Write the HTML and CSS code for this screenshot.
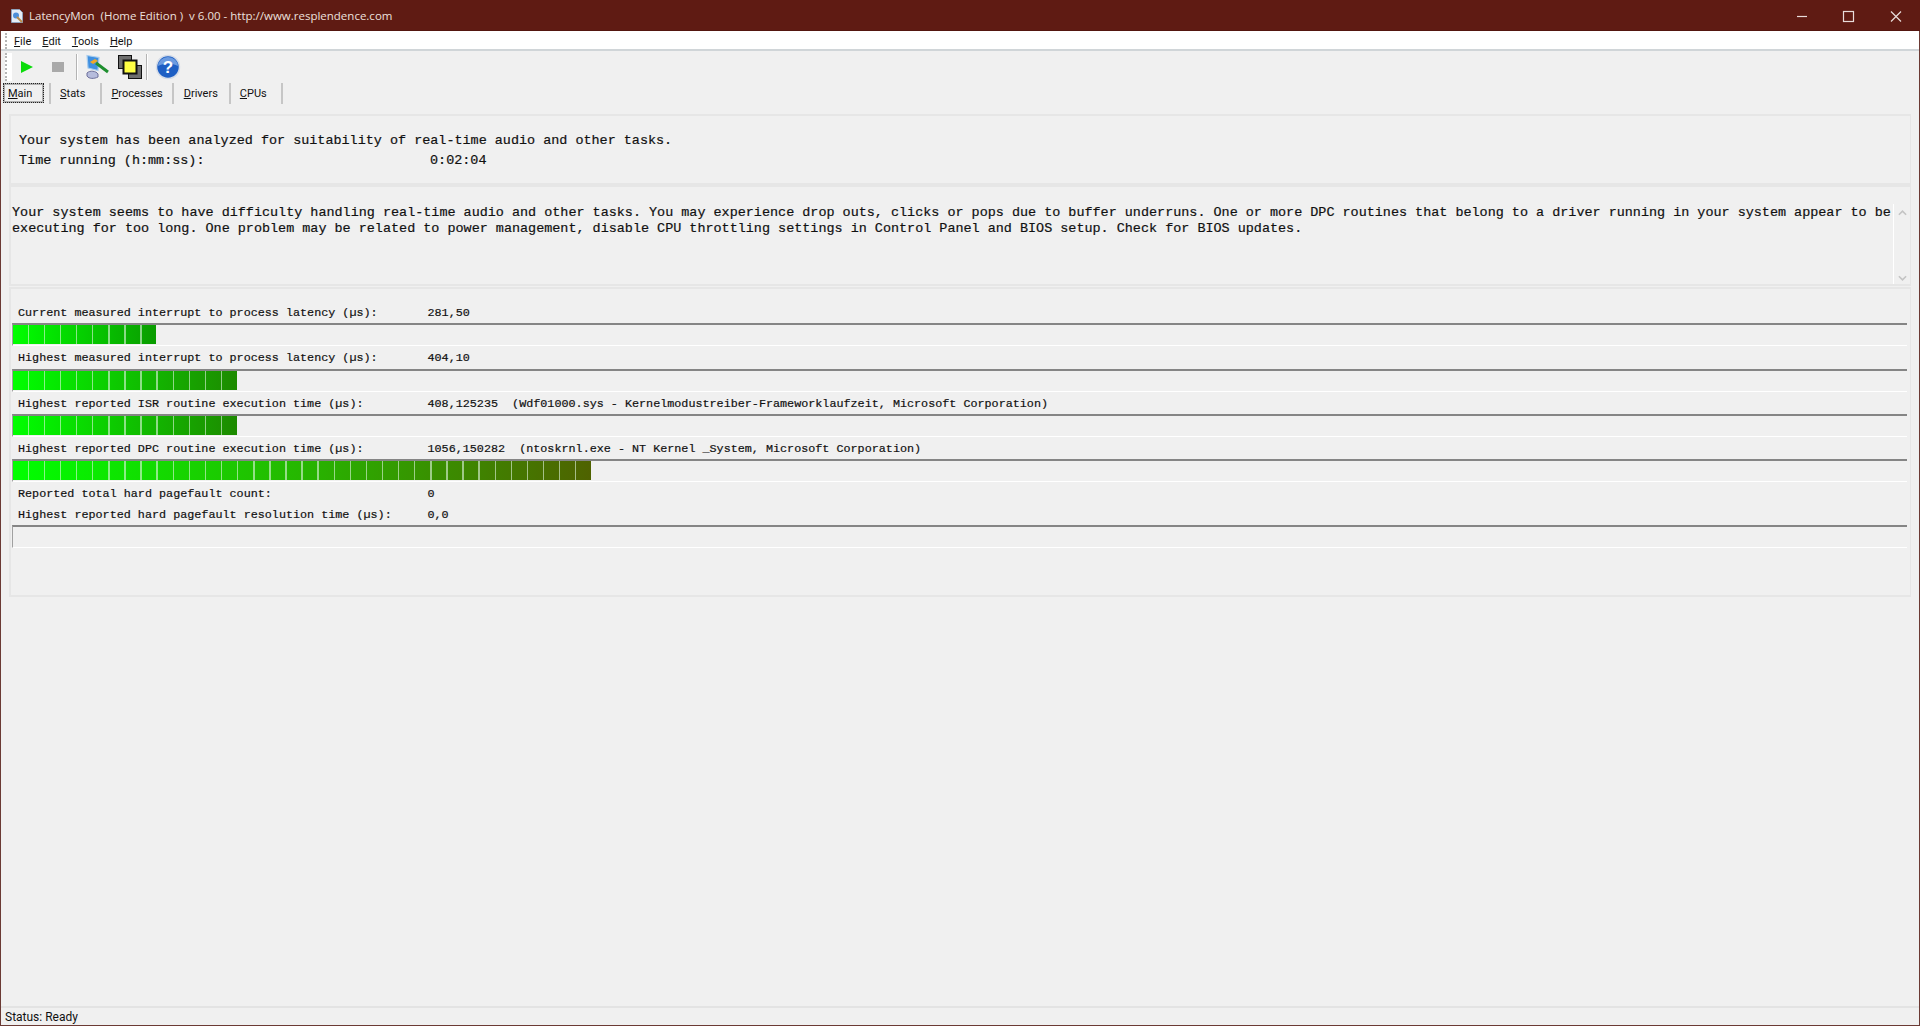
FILE: index.html
```html
<!DOCTYPE html>
<html lang="en">
<head>
<meta charset="utf-8">
<title>LatencyMon</title>
<link rel="stylesheet" href="styles.css">
</head>
<body>
<div class="window">
  <header class="titlebar">
    <svg class="appicon" viewBox="0 0 16 16" width="16" height="16">
      <path d="M2.500 1.500h8l3 3v10h-11z" fill="#e6edf6" stroke="#8fa3bd"/>
      <circle cx="7" cy="7.500" r="3" fill="#4f8fd8"/>
      <path d="M8 9l5 5" stroke="#b98b4a" stroke-width="2"/>
    </svg>
    <span class="title-text">LatencyMon&nbsp; (Home Edition )&nbsp; v 6.00 - http://www.resplendence.com</span>
    <div class="winctrls">
      <svg viewBox="0 0 46 30" width="46" height="30"><path d="M18 15.500h10" stroke="#e9dcda" stroke-width="1.200"/></svg>
      <svg class="ctrl-max" viewBox="0 0 46 30" width="46" height="30"><rect x="18.500" y="10.500" width="10" height="10" fill="none" stroke="#e9dcda" stroke-width="1.200"/></svg>
      <svg viewBox="0 0 46 30" width="46" height="30"><path d="M18 10.500l10 10M28 10.500l-10 10" stroke="#e9dcda" stroke-width="1.200"/></svg>
    </div>
  </header>
  <nav class="menubar">
    <span class="grip"></span>
    <span class="menu"><u>F</u>ile</span><span class="menu"><u>E</u>dit</span><span class="menu"><u>T</u>ools</span><span class="menu"><u>H</u>elp</span>
  </nav>
  <div class="toolbar">
    <span class="grip grip-tool"></span>
    <svg class="tool tool-play" viewBox="0 0 24 24" width="24" height="24"><path d="M6 6l12 6-12 6z" fill="#0bdc0b"/></svg>
    <svg class="tool tool-stop" viewBox="0 0 24 24" width="24" height="24"><rect x="6" y="7" width="12" height="10" fill="#a9a9a9"/></svg>
    <span class="sep"></span>
    <svg class="tool tool-mon" viewBox="0 0 26 26" width="26" height="26">
      <path d="M3 1.500l12 2-1 13-10-2.500z" fill="#3f8fe0" stroke="#a8cdee" stroke-width="1.200"/>
      <path d="M3 19c3-3 9-2 11 1v3c-4 2-9 2-11-1z" fill="#b6bcdc" stroke="#6c6f9a"/>
      <path d="M6 8l5-3 3 2-5 3z" fill="#f0a828"/>
      <path d="M12 9l12 9" stroke="#1f8f2f" stroke-width="3"/>
    </svg>
    <svg class="tool tool-win" viewBox="0 0 26 26" width="26" height="26">
      <rect x="1.500" y="1.500" width="13" height="13" fill="#6e6e6e" stroke="#111"/>
      <rect x="11.500" y="11.500" width="13" height="13" fill="#6e6e6e" stroke="#111"/>
      <rect x="6.500" y="6.500" width="13" height="13" fill="#ffff44" stroke="#111" stroke-width="2"/>
    </svg>
    <span class="sep sep-help"></span>
    <svg class="tool tool-help" viewBox="0 0 26 26" width="26" height="26">
      <circle cx="13" cy="13" r="11.500" fill="#1e5fc4" stroke="#d5dce8" stroke-width="1.500"/>
      <path d="M3 12a10 9 0 0 1 20 0c-6-3-14-3-20 0z" fill="#6c9be0"/>
      <text x="13" y="19" class="help-q">?</text>
    </svg>
  </div>
  <div class="tabs">
    <span class="tab tab-active"><u>M</u>ain</span>
    <span class="tab tab-stats"><u>S</u>tats</span>
    <span class="tab tab-proc"><u>P</u>rocesses</span>
    <span class="tab tab-drv"><u>D</u>rivers</span>
    <span class="tab tab-cpu"><u>C</u>PUs</span>
  </div>
  <main class="content">
    <section class="panel panel-head">
      <p class="big">Your system has been analyzed for suitability of real-time audio and other tasks.</p>
      <p class="big time-row"><span class="time-label">Time running (h:mm:ss):</span><span>0:02:04</span></p>
    </section>
    <section class="panel panel-msg">
      <p class="big msg">Your system seems to have difficulty handling real-time audio and other tasks. You may experience drop outs, clicks or pops due to buffer underruns. One or more DPC routines that belong to a driver running in your system appear to be executing for too long. One problem may be related to power management, disable CPU throttling settings in Control Panel and BIOS setup. Check for BIOS updates.</p>
      <div class="scroll">
        <svg viewBox="0 0 10 6" width="9" height="6"><path d="M1 5l4-4 4 4" fill="none" stroke="#c4c4c4" stroke-width="1.800"/></svg>
        <svg viewBox="0 0 10 6" width="9" height="6"><path d="M1 1l4 4 4-4" fill="none" stroke="#c4c4c4" stroke-width="1.800"/></svg>
      </div>
    </section>
    <section class="panel panel-meters">
      <div class="row"><span class="lbl">Current measured interrupt to process latency (µs):</span><span>281,50</span></div>
      <div class="bar"><div class="fill fill-a"></div></div>
      <div class="row"><span class="lbl">Highest measured interrupt to process latency (µs):</span><span>404,10</span></div>
      <div class="bar"><div class="fill fill-b"></div></div>
      <div class="row"><span class="lbl">Highest reported ISR routine execution time (µs):</span><span>408,125235&nbsp; (Wdf01000.sys - Kernelmodustreiber-Frameworklaufzeit, Microsoft Corporation)</span></div>
      <div class="bar"><div class="fill fill-b"></div></div>
      <div class="row"><span class="lbl">Highest reported DPC routine execution time (µs):</span><span>1056,150282&nbsp; (ntoskrnl.exe - NT Kernel _System, Microsoft Corporation)</span></div>
      <div class="bar"><div class="fill fill-c"></div></div>
      <div class="row"><span class="lbl">Reported total hard pagefault count:</span><span>0</span></div>
      <div class="row row-tight"><span class="lbl">Highest reported hard pagefault resolution time (µs):</span><span>0,0</span></div>
      <div class="bar"></div>
    </section>
  </main>
  <footer class="status">Status: Ready</footer>
</div>
</body>
</html>
```
FILE: styles.css
```css
* { box-sizing: border-box; }
html, body { margin: 0; height: 100%; }
body { background: #f0f0f0; overflow: hidden; }
p { margin: 0; }
.window {
  height: 1026px; display: flex; flex-direction: column;
  border-left: 1px solid #6b3a34; border-right: 1px solid #6b3a34; border-bottom: 1px solid #6b3a34;
  font-family: Roboto, "Open Sans", sans-serif; color: #111;
}
.titlebar { height: 31px; background: #5f1b13; color: #ece0de; display: flex; align-items: center; padding: 1px 0 0 9px; flex: none; margin: 0 -1px; border-bottom: 1px solid #54160f; }
.appicon { margin-right: 4px; }
.title-text { font-family: "Open Sans", sans-serif; font-size: 11.5px; flex: 1; }
.winctrls { display: flex; margin-right: 1px; }
.winctrls svg { display: block; }
.ctrl-max { margin-right: 2px; }
.menubar { height: 20px; background: #fff; border-bottom: 2px solid #d0d5d8; display: flex; align-items: center; flex: none; padding: 2px 0 0 4px; font-size: 11px; }
.grip { width: 2px; height: 100%; border-left: 2px dotted #b5b5b5; margin-right: 7px; }
.menu { margin-right: 11px; }
.toolbar { height: 32px; display: flex; align-items: center; flex: none; padding-left: 4px; }
.grip-tool { width: 7px; height: 28px; margin-right: 3px; background: #fff; }
.tool { display: block; flex: none; }
.tool-stop { margin-left: 7px; }
.tool-mon { margin-left: 6px; }
.tool-win { margin-left: 7px; }
.tool-help { margin-left: 7px; }
.sep { width: 2px; height: 26px; background: #b4b4b4; border-right: 1px solid #fff; margin-left: 6px; }
.sep-help { margin-left: 3px; }
.help-q { font: bold 17px "Liberation Sans", sans-serif; fill: #fff; text-anchor: middle; }
.tabs { height: 22px; display: flex; align-items: flex-start; flex: none; font-size: 11px; padding-left: 2px; }
.tab { height: 21px; display: flex; align-items: center; border-right: 2px solid #c6c6c6; padding: 0 11px 0 9px; }
.tab-active { width: 41px; padding: 0 3px; outline: 1px dotted #222; border: 2px solid #b0b0b0; outline-offset: -1px; margin-right: 5px; height: 20px; }
.tab-stats { padding-left: 9px; padding-right: 15px; border-left: 2px solid #c6c6c6; }
.tab-proc { padding: 0 9px; }
.tab-drv { padding: 0 11px 0 10px; }
.tab-cpu { padding-right: 14px; }
.content { flex: 1; padding: 9px 8px 0 8px; display: flex; flex-direction: column; min-height: 0; }
.panel { border: 2px solid #e6e6e6; border-right-width: 1px; }
.big { font-family: "Liberation Mono", monospace; font-size: 13.45px; line-height: 20px; color: #111; -webkit-text-stroke: 0.2px #111; }
.panel-head { height: 71px; padding: 15px 0 0 8px; }
.time-row { display: flex; }
.time-label { width: 411px; }
.panel-msg { height: 101px; padding: 18px 0 0 1px; position: relative; display: flex; }
.msg { line-height: 16px; width: 1885px; }
.scroll { position: absolute; right: 0; top: 17px; bottom: 0; width: 17px; border-left: 1px solid #fff; display: flex; flex-direction: column; justify-content: space-between; padding: 6px 0 3px; align-items: center; }
.panel-meters { height: 310px; margin-top: 1px; padding: 12px 0 0 1px; font-family: "Liberation Mono", monospace; font-size: 11.75px; -webkit-text-stroke: 0.2px #111; }
.row { height: 22.3px; display: flex; align-items: center; padding: 2px 0 0 6px; white-space: pre; }
.row-tight { height: 20.5px; padding-top: 0; }
.lbl { width: 409.500px; flex: none; }
.bar { height: 23px; margin-right: 3px; border-top: 2px solid #858585; border-left: 1px solid #a0a0a0; border-bottom: 1px solid #fff; }
.fill { height: 19px; position: relative; }
.fill::after { content: ""; position: absolute; inset: 0; background: repeating-linear-gradient(to right, transparent 0 14.6px, rgba(225,245,225,.6) 14.6px 16.1px); }
.fill-a { width: 143.4px; background: linear-gradient(to right, #00ff00, #0a9c00); }
.fill-b { width: 223.9px; background: linear-gradient(to right, #00ff00, #1d8a00); }
.fill-c { width: 578.1px; background: linear-gradient(to right, #00ff00, #26b600 50%, #4f6200); }
.status { height: 19px; margin-top: auto; border-top: 2px solid #e3e3e3; padding: 0 0 0 4px; font-size: 12px; line-height: 18px; flex: none; }
```
